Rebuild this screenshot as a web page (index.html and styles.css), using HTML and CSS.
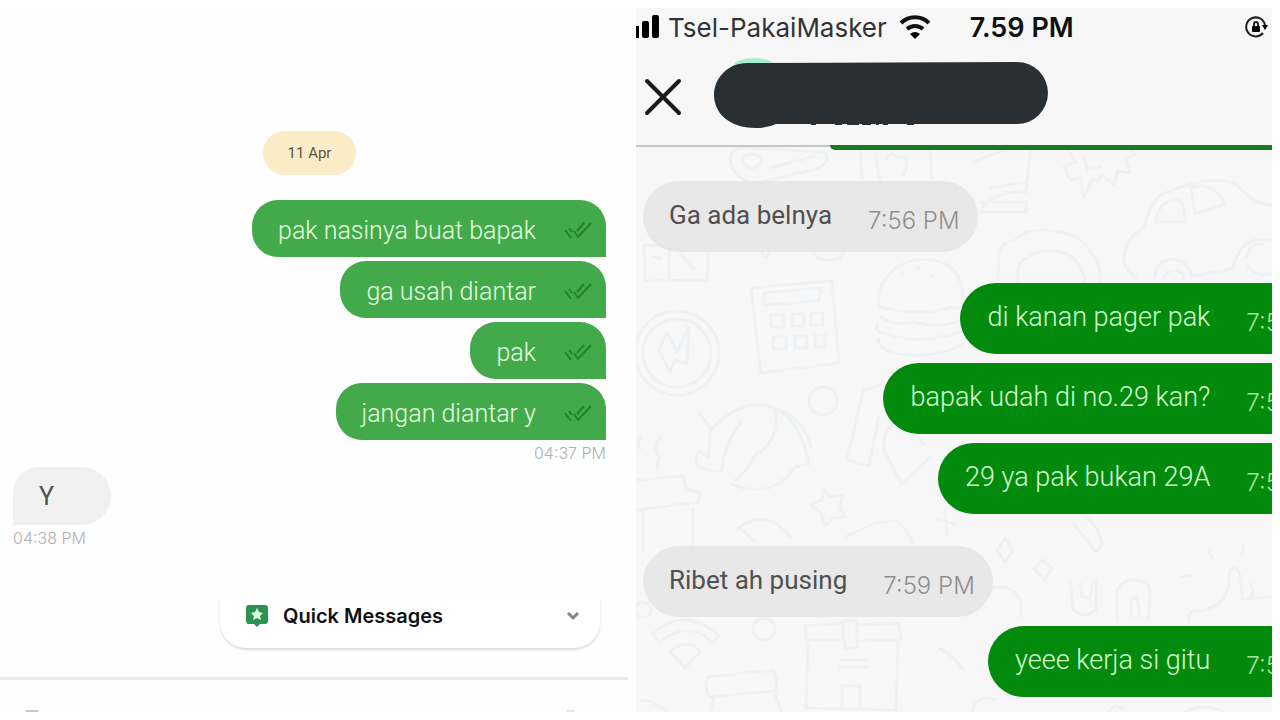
FILE: index.html
```
<!DOCTYPE html>
<html lang="id">
<head>
    <meta charset="UTF-8">
    <meta name="viewport" content="width=device-width, initial-scale=1.0">
    <title>Chat</title>
    <link rel="stylesheet" href="styles.css">
</head>
<body>

    <svg class="defs" aria-hidden="true">
        <symbol id="checks" viewBox="0 0 28 20">
            <path d="M1 10l6 8M5 8l3 4M10 11l4 6L27 3M13 11l7-8"/>
        </symbol>
    </svg>

    <main class="screens">
        <section class="chat chat-left">
            <div class="messages">
                <p class="date">11 Apr</p>
                <div class="bubble sent"><span>pak nasinya buat bapak</span><svg class="checks"><use href="#checks"/></svg></div>
                <div class="bubble sent"><span>ga usah diantar</span><svg class="checks"><use href="#checks"/></svg></div>
                <div class="bubble sent"><span>pak</span><svg class="checks"><use href="#checks"/></svg></div>
                <div class="bubble sent"><span>jangan diantar y</span><svg class="checks"><use href="#checks"/></svg></div>
                <time class="time time-sent">04:37 PM</time>
                <div class="bubble received"><span>Y</span></div>
                <time class="time">04:38 PM</time>
            </div>
            <button class="quick" type="button">
                <svg class="quick-icon" viewBox="0 0 24 24">
                    <path fill="#2c9152" d="M4 1h16a3 3 0 0 1 3 3v13a3 3 0 0 1-3 3h-5l-3 3-3-3H4a3 3 0 0 1-3-3V4a3 3 0 0 1 3-3z"/>
                    <path fill="#d9ffe4" d="M12 4l2 4 4 1-3 3 1 4-4-2-4 2 1-4-3-3 4-1z"/>
                </svg>
                <span>Quick Messages</span>
                <svg class="arrow" viewBox="0 0 14 10"><path d="M2 2l5 5 5-5"/></svg>
            </button>
            <footer class="composer"><i class="stub"></i><i class="stub stub-light"></i></footer>
        </section>

        <section class="chat chat-right">
            <header>
                <div class="status">
                    <svg class="signal" viewBox="0 0 24 26">
                        <rect x="0" y="12" width="3" height="12"/>
                        <rect x="6" y="7" width="7" height="17" rx="2"/>
                        <rect x="16" y="1" width="7" height="23" rx="2"/>
                    </svg>
                    <span class="carrier">Tsel-PakaiMasker</span>
                    <svg class="wifi" viewBox="0 0 34 26">
                        <path class="wave" d="M3 9a20 20 0 0 1 28 0M9 15a12 12 0 0 1 16 0"/>
                        <path d="M17 25l-5-5a8 8 0 0 1 10 0z"/>
                    </svg>
                    <span class="clock">7.59 PM</span>
                    <svg class="lock" viewBox="0 0 24 24">
                        <path class="ring" d="M21 10A9.500 9.500 0 1 0 19 18"/>
                        <path d="M18 10h6l-3 5z"/>
                        <rect x="8" y="11" width="8" height="6" rx="1"/>
                        <path class="shackle" d="M10 11V9a2 2 0 0 1 4 0v2"/>
                    </svg>
                </div>
                <div class="titlebar">
                    <button class="close" type="button" aria-label="Tutup">
                        <svg viewBox="0 0 38 38"><path d="M3 3l32 32M35 3L3 35"/></svg>
                    </button>
                    <svg class="name" viewBox="0 0 338 72">
                        <ellipse cx="41" cy="10" rx="20" ry="8" fill="#a5efcf"/>
                        <path fill="#2a2f33" d="M34 7L304 6a31 31 0 0 1 0 62H63q-8 4-20 4C15 72 1 56 1 39S15 7 34 7z"/>
                        <path stroke="#2a2f33" stroke-width="2" stroke-dasharray="5 19 7 5 12 3 9 5 3 4" d="M98 68h106"/>
                    </svg>
                </div>
            </header>
            <div class="thread">
                <!-- faint wallpaper doodles -->
                <svg class="doodles" viewBox="636 147 636 565" preserveAspectRatio="xMinYMin slice">
                    <path d="M730 158q3-12 20-10l75 4q6 9-6 16l-62 15q-24-2-27-25zM742 160q5-9 14-5t2 11q-10 6-16-6zM770 168l45-12"/>
                    <path d="M860 148l2 32M875 152l5 30M885 160l6-7 7 5 8-1 1 10-4 9M930 150l2 30"/>
                    <path d="M972 162l60-22-6 52q-28-2-44 16M980 202h46v10h-46M990 188l35-6"/>
                    <path d="M1068 150l8 12-12 4 6 14 10-3 4 20 8-18 6 2 4-6 12 10 4-14 12 2-4-14 10-5-10-8 2-8M1083 156l5 14 14-4"/>
                    <path d="M1138 278q-15-8-14-22 3-20 20-28 7-32 24-36 42-18 68-8 15 17 28 20l10 2M1155 278q0-18 19-19 15 3 18 17l40-7q8-27 24-29l18 1M1156 222q2-22 22-22 6 0 7 22zM1195 214l-4-26q22-8 34 16zM1163 279q6-12 15-8t4 9M1246 258q4-16 17-14M1247 265q8 13 24 8"/>
                    <path d="M998 282l1-30q4-11 16-11 8-14 40-10 28 4 36 22 10 9 9 29M1018 282q-2-22 10-24 11-12 39-4 15 8 18 28"/>
                    <path d="M644 245l65 2-2 33-62 1zM669 248v30M652 256l10 3M680 254l15 16M760 250l6 8 5-8M810 247q6 18 30 11l6-9"/>
                    <path d="M751 288l81-7 7 82-78 10zM764 293l57-5-2 13-55 4zM771 315h13v12h-13zM792 314h12v12h-12zM811 313h12v12h-12zM773 337h13v12h-13zM795 336h12v12h-12zM815 335h10v12h-10z"/>
                    <path d="M880 307q-5-17 8-31 16-19 45-16 30 6 30 37 0 15-10 10-30 10-73 0zM879 316q15 11 35 6 25 8 49-3M878 324q-5 9 10 10 32 12 75-3M878 338q2 14 20 16 40 5 65-10M900 272l4 3M916 267l4 3M930 275l4 1"/>
                    <circle cx="677" cy="353" r="42"/><circle cx="677" cy="353" r="34"/><path d="M659 350l8-18 10 20 12-25-2 37-12-4-5 12z"/>
                    <circle cx="823" cy="401" r="14"/>
                    <path d="M699 412l12 17q40-39 73-15 18 14 25 50l-14 3q-24 35-66 16M711 429l-3 28-9-6q-12 21 23 20 1-26 20-50M776 410q2 34-20 44-11 20-22 27M775 409q30 8 36 40"/>
                    <path d="M882 384l-19 7-16 69 22 6 10-50M895 424q-13 6-11 27l18 33 29-28M924 445l-12-16-15 2"/>
                    <path d="M641 450q-5-5 0-14M661 437q-10 12-1 20-5 8-2 13M636 480l47-4 3 13 15 4-3 9-62 8M693 508v37l-10 44M643 511v40"/>
                    <path d="M824 488l6 9 13-2-4 13 7 9-13 1-8 8-4-13-10-8 11-5zM736 530q30-25 55 8M738 526l18 17M845 537l30-14 22-2q16 15 15 25M935 520l22 4M945 508l2 28"/>
                    <path d="M997 550l8-12 8 13-8 11zM1034 569l8-9 10 8-7 12zM1072 522l24 30 6-8q-4-20-18-28M1208 550l5 9M1244 545l-2 10M1180 577l12-2"/>
                    <path d="M1070 579l3 30q11 11 23 1V581M1080 582l2 15 8 1 3-17M1117 622v-30q4-13 20-12 15 2 13 18l-2 22M1131 618v-18q8-9 8 18"/>
                    <path d="M1189 622q-1-12 7-11 36-3 33-38 7-13 12 6l1 20 30-2M1250 582q6 9 0 19M992 588q23-5 29 15v15M938 648q12 4 26 22"/>
                    <circle cx="643" cy="610" r="8"/><path d="M653 634q30-29 66 1l-6 8q-24-25-54 0zM670 652q18-16 30 0l-15 16z"/><circle cx="764" cy="629" r="11"/>
                    <path d="M708 677l65-7q6 10 2 21l-65 6q-7-9-2-20zM714 697l-4 15M774 692l8 20M640 700l12 2 16 10"/>
                    <path d="M805 626l38-3v17h-37zM842 621h15v27h-12zM857 625l42-2 2 17-44 1zM808 644l-2 64 90 2 2-68M840 660h27M838 667h30M842 708v-22h18v23"/>
                    <path d="M972 712q4-19 24-12M1108 712l7-6 10 3M1185 712q16-10 40 0"/>
                </svg>
                <div class="peek"></div>
                <div class="bubble incoming"><span>Ga ada belnya</span><time>7:56 PM</time></div>
                <div class="bubble outgoing first"><span>di kanan pager pak</span><time>7:5</time></div>
                <div class="bubble outgoing"><span>bapak udah di no.29 kan?</span><time>7:5</time></div>
                <div class="bubble outgoing"><span>29 ya pak bukan 29A</span><time>7:5</time></div>
                <div class="bubble incoming"><span>Ribet ah pusing</span><time>7:59 PM</time></div>
                <div class="bubble outgoing"><span>yeee kerja si gitu</span><time>7:5</time></div>
            </div>
        </section>
    </main>

</body>
</html>
```

FILE: styles.css
```
* {
    box-sizing: border-box;
}

body {
    margin: 0;
    background-color: #ffffff;
    font-family: Roboto, Arial, sans-serif;
    font-size: 26px;
    color: #505050;
}

button {
    border: none;
    padding: 0;
    font: inherit;
    cursor: pointer;
}

svg {
    display: block;
    flex: none;
}

.defs {
    position: absolute;
    width: 0;
    height: 0;
}

.screens {
    display: grid;
    grid-template-columns: 157fr 159fr;
    gap: 8px;
    min-height: 100vh;
    padding: 8px 8px 8px 0;
}

.chat {
    display: flex;
    flex-direction: column;
    min-width: 0;
}

.bubble {
    display: flex;
    align-items: center;
    white-space: nowrap;
}

/* left chat */
.chat-left {
    background-color: #fefefe;
}

.messages {
    display: flex;
    flex-direction: column;
    align-items: flex-end;
    gap: 4px;
    padding: 123px 22px 0 13px;
    font-size: 25px;
}

.date {
    align-self: center;
    margin: 0 0 21px;
    padding: 0 25px;
    border-radius: 22px;
    background-color: #fbecc8;
    color: #5f5544;
    font-size: 15px;
    line-height: 44px;
}

.sent {
    gap: 28px;
    height: 57px;
    padding: 3px 14px 0 26px;
    border-radius: 26px 26px 0 26px;
    background-color: #43aa4b;
    color: #e6ffe0;
    font-weight: 300;
}

.checks {
    width: 28px;
    height: 20px;
    fill: none;
    stroke: #26812f;
    stroke-width: 2;
}

.received {
    align-self: flex-start;
    width: 98px;
    height: 58px;
    margin-top: 1px;
    padding: 0 26px;
    border-radius: 26px 29px 29px 0;
    background-color: #f0f0f0;
}

.time {
    align-self: flex-start;
    font-family: Inter, Arial, sans-serif;
    font-weight: 300;
    font-size: 16px;
    line-height: 18px;
    color: #b0b0b0;
}

.time-sent {
    align-self: flex-end;
}

.quick {
    display: flex;
    align-items: center;
    gap: 14px;
    height: 52px;
    margin: auto 28px 29px 220px;
    padding: 0 20px 12px 25px;
    border-radius: 0 0 26px 26px;
    background-color: #ffffff;
    box-shadow: 0 2px 2px #dedede;
    color: #111111;
    font-family: Inter, Arial, sans-serif;
    font-size: 20px;
    font-weight: 600;
}

.quick-icon {
    width: 24px;
    height: 24px;
}

.arrow {
    width: 14px;
    height: 10px;
    margin-left: auto;
    fill: none;
    stroke: #858585;
    stroke-width: 3;
}

.composer {
    display: flex;
    align-items: flex-end;
    justify-content: space-between;
    height: 35px;
    padding: 0 53px 0 26px;
    border-top: 3px solid #e9e9e9;
}

.stub {
    width: 12px;
    height: 2px;
    background-color: #c6c6c6;
}

.stub-light {
    width: 8px;
    background-color: #e9e9e9;
}

/* right chat */
.chat-right {
    overflow: hidden;
    background-color: #f7f7f8;
}

header {
    border-bottom: 2px solid #c5c5c5;
}

.status {
    display: flex;
    align-items: center;
    height: 38px;
    padding-right: 4px;
    color: #111111;
    font-family: Inter, Arial, sans-serif;
    white-space: nowrap;
}

.signal {
    width: 24px;
    height: 26px;
}

.carrier {
    margin-left: 8px;
    color: #333333;
}

.wifi {
    width: 34px;
    height: 26px;
    margin: 0 38px 0 11px;
}

.wave {
    fill: none;
    stroke: #111111;
    stroke-width: 4;
}

.clock {
    font-size: 27px;
    font-weight: 600;
}

.lock {
    width: 24px;
    height: 24px;
    margin-left: auto;
}

.ring,
.shackle {
    fill: none;
    stroke: #222222;
    stroke-width: 2;
}

.titlebar {
    display: flex;
    align-items: center;
    gap: 31px;
    height: 99px;
    padding: 0 0 8px 8px;
}

.close {
    padding-top: 10px;
    background: none;
}

.close svg {
    width: 38px;
    height: 38px;
    stroke: #1b1b1b;
    stroke-width: 4;
    stroke-linecap: round;
}

.name {
    width: 338px;
    height: 72px;
}

.thread {
    position: relative;
    display: flex;
    flex-direction: column;
    align-items: flex-start;
    gap: 9px;
    flex: 1;
    padding-left: 7px;
}

.doodles {
    position: absolute;
    top: 0;
    left: 0;
    width: 100%;
    height: 100%;
    fill: none;
    stroke: #eef1f3;
    stroke-width: 3;
    stroke-linejoin: round;
}

/* end of the message scrolled under the header */
.peek {
    position: absolute;
    top: -2px;
    left: 194px;
    right: 0;
    height: 5px;
    border-radius: 0 0 0 12px;
    background-color: #1a7a1e;
}

.thread .bubble {
    position: relative;
    height: 71px;
    padding-bottom: 3px;
    border-radius: 36px;
}

.thread time {
    padding-top: 11px;
    font-family: Inter, Arial, sans-serif;
    font-weight: 300;
    font-size: 24px;
}

.incoming {
    gap: 36px;
    margin-top: 23px;
    padding: 0 18px 0 26px;
    background-color: #e8e8e8;
}

.peek + .incoming {
    margin-top: 34px;
}

.incoming time {
    color: #8f8f8f;
}

.thread .outgoing {
    align-self: flex-end;
    gap: 36px;
    margin-right: -8px;
    padding-left: 27px;
    border-radius: 36px 0 0 36px;
    background-color: #028a0c;
    color: #d5ffd0;
    font-size: 27px;
    font-weight: 300;
}

.thread .first {
    margin-top: 22px;
}

.outgoing time {
    color: #a2e29d;
}
```
